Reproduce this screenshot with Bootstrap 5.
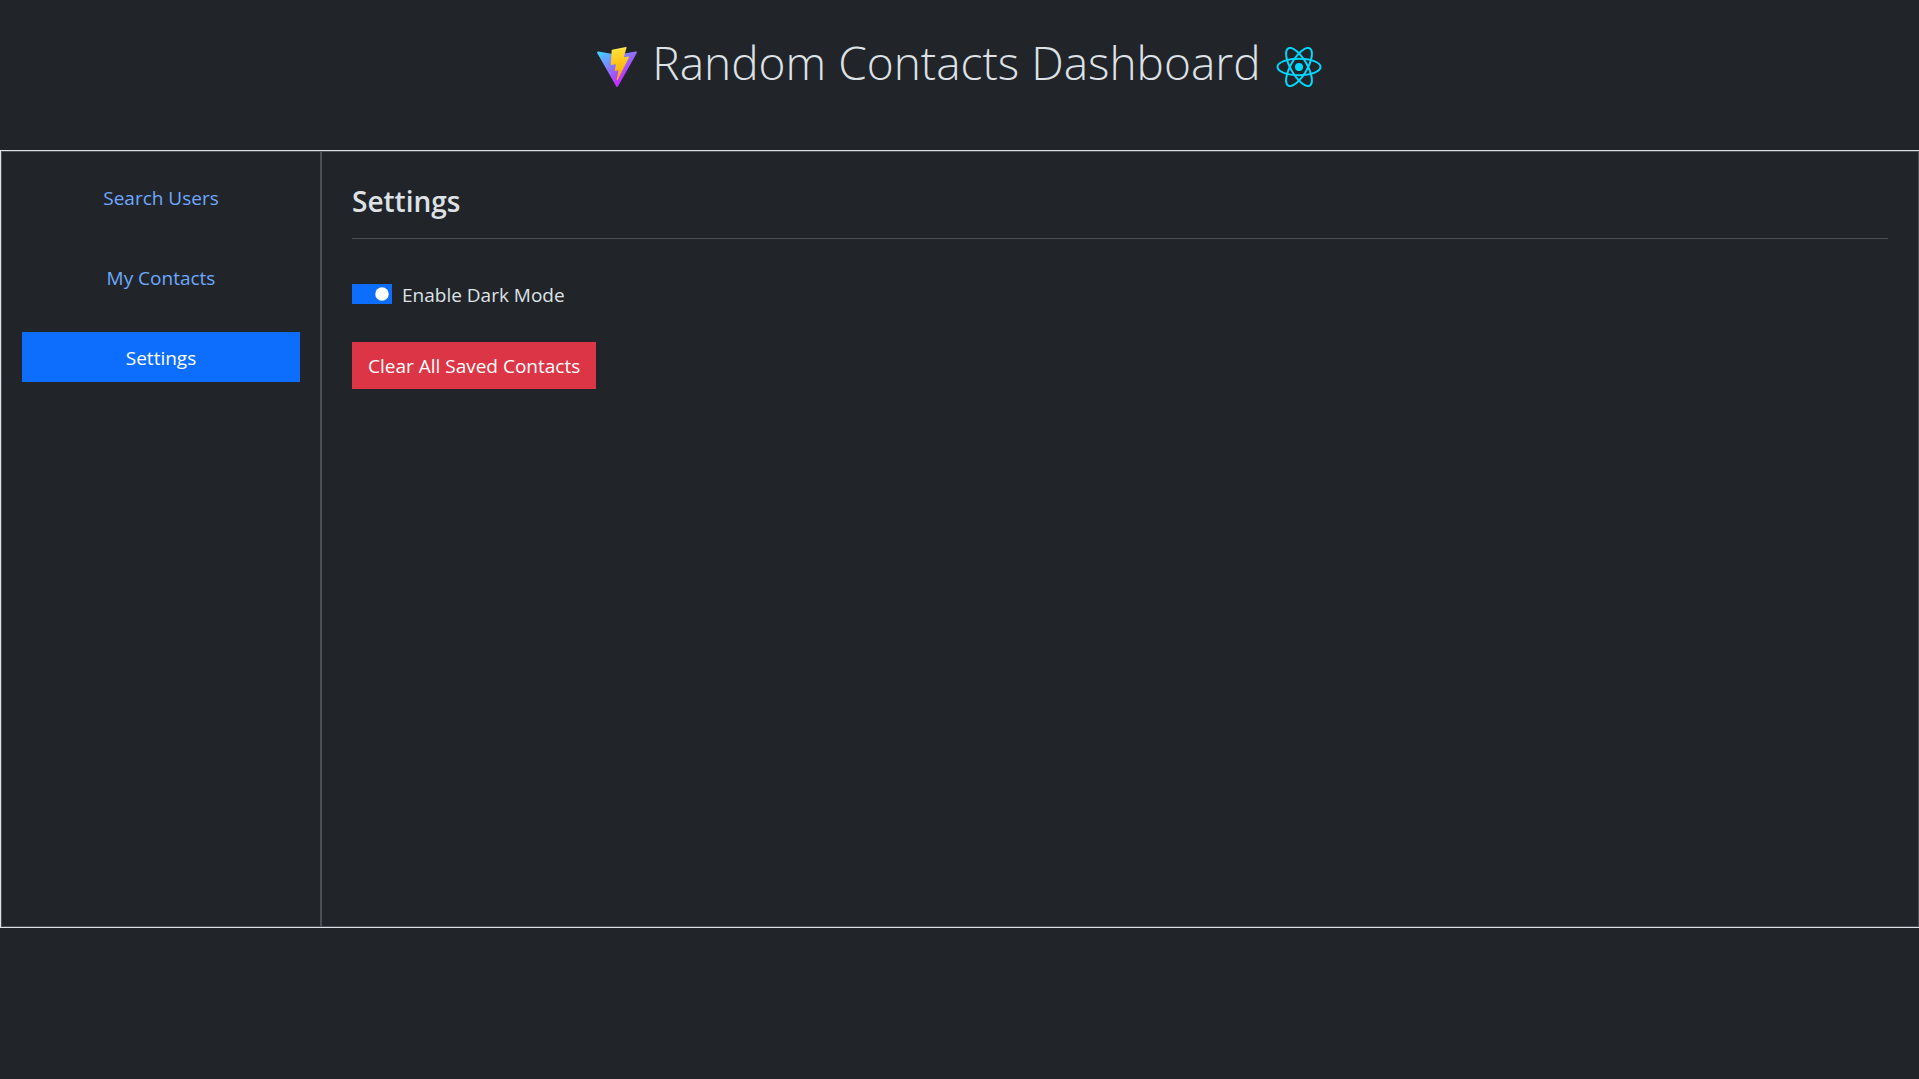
<!DOCTYPE html>
<html lang="en" data-bs-theme="dark">
<head>
<meta charset="utf-8">
<meta name="viewport" content="width=device-width, initial-scale=1">
<title>Random Contacts Dashboard</title>
<link href="https://cdn.jsdelivr.net/npm/bootstrap@5.3.0/dist/css/bootstrap.min.css" rel="stylesheet">
<style>
:root{font-size:20px}
body{font-family:"Segoe UI","Open Sans","Noto Sans",sans-serif;font-size:19px;line-height:30px;color:#dee2e6;background:#212529}
.page-header{padding:32px 0 58px}
.page-title{font-size:46px;font-weight:300;line-height:60px;gap:15px;color:#dee2e6}
.page-title svg{margin-top:10px}
.panel-frame{border:1px solid #dee2e6;border-right:0;min-height:72.1vh}
.panel-inner{border:1px solid #495057}
.side-menu{width:320px;padding:20px;border-right:2px solid #495057}
.side-menu .nav-link{color:#6ea8fe;border-radius:0;padding:11px 20px 9px}
.side-menu .nav-link.active{color:#fff;background:#0d6efd}
.content-pane{padding:31px 30px 30px}
.section-title{font-size:28px;font-weight:600;line-height:36px;margin-bottom:19px;color:#dee2e6}
.section-rule{border-top:1px solid #4d5154;opacity:1;margin:0 0 41px}
.dark-switch{padding-left:50px;margin-bottom:32px;min-height:30px}
.dark-switch .form-check-input{width:40px;height:20px;margin-top:4px;margin-left:-50px;border-radius:0}
.btn-clear{border-radius:0;font-size:19px;line-height:30px;padding:8px 15px 7px}
</style>
</head>
<body>
<header class="page-header d-flex justify-content-center">
<h1 class="page-title d-flex align-items-center mb-0">
<svg width="40" height="40" viewBox="0 0 256 257" aria-hidden="true"><defs><linearGradient id="va" x1="-.828%" x2="57.636%" y1="7.652%" y2="78.411%"><stop offset="0%" stop-color="#41D1FF"/><stop offset="100%" stop-color="#BD34FE"/></linearGradient><linearGradient id="vb" x1="43.376%" x2="50.316%" y1="2.242%" y2="89.03%"><stop offset="0%" stop-color="#FFEA83"/><stop offset="8.333%" stop-color="#FFDD35"/><stop offset="100%" stop-color="#FFA800"/></linearGradient></defs><path fill="url(#va)" d="M255.153 37.938 134.897 252.976c-2.483 4.44-8.862 4.466-11.382.048L.875 37.958c-2.746-4.814 1.371-10.646 6.827-9.67l120.385 21.517a6.537 6.537 0 0 0 2.322-.004l117.867-21.483c5.438-.991 9.574 4.796 6.877 9.62Z"/><path fill="url(#vb)" d="M185.432.063 96.44 17.501a3.268 3.268 0 0 0-2.634 3.014l-5.474 92.456a3.268 3.268 0 0 0 3.997 3.378l24.777-5.718c2.318-.535 4.413 1.507 3.936 3.838l-7.361 36.047c-.495 2.426 1.782 4.5 4.151 3.78l15.304-4.649c2.372-.72 4.652 1.36 4.15 3.788l-11.698 56.621c-.732 3.542 3.979 5.473 5.943 2.437l1.313-2.028 72.516-144.72c1.215-2.423-.88-5.186-3.54-4.672l-25.505 4.922c-2.396.462-4.435-1.77-3.759-4.114l16.646-57.705c.677-2.35-1.37-4.583-3.769-4.113Z"/></svg>
<span>Random Contacts Dashboard</span>
<svg width="46" height="40" viewBox="-11.5 -10.232 23 20.463" aria-hidden="true"><circle r="2.05" fill="#00d8ff"/><g stroke="#00d8ff" fill="none"><ellipse rx="11" ry="4.2"/><ellipse rx="11" ry="4.2" transform="rotate(60)"/><ellipse rx="11" ry="4.2" transform="rotate(120)"/></g></svg>
</h1>
</header>
<div class="panel-frame d-flex">
<div class="panel-inner d-flex flex-grow-1">
<nav class="side-menu flex-shrink-0">
<ul class="nav nav-pills flex-column gap-4 text-center">
<li class="nav-item"><a class="nav-link" href="#">Search Users</a></li>
<li class="nav-item"><a class="nav-link" href="#">My Contacts</a></li>
<li class="nav-item"><a class="nav-link active" href="#" aria-current="page">Settings</a></li>
</ul>
</nav>
<main class="flex-grow-1 content-pane">
<h2 class="section-title">Settings</h2>
<hr class="section-rule">
<div class="form-check form-switch dark-switch">
<input class="form-check-input" type="checkbox" role="switch" id="darkMode" checked>
<label class="form-check-label" for="darkMode">Enable Dark Mode</label>
</div>
<button type="button" class="btn btn-danger btn-clear">Clear All Saved Contacts</button>
</main>
</div>
</div>
<script src="https://cdn.jsdelivr.net/npm/bootstrap@5.3.0/dist/js/bootstrap.bundle.min.js"></script>
</body>
</html>
